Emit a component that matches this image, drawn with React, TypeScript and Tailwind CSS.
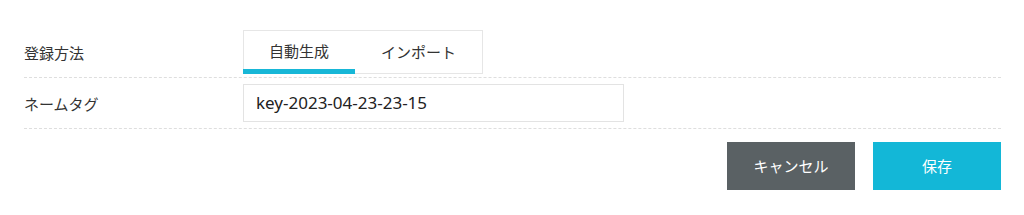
import React from "react";

export default function App() {
  return (
    <div
      className="w-[1024px] h-[215px] bg-white pt-[30px] pl-6 pr-[23px] text-[#333]"
      style={{ fontFamily: '"Noto Sans CJK JP", "Noto Sans", sans-serif' }}
    >
      <div className="flex items-center pb-[3px] border-b border-dashed border-[#dedede]">
        <div className="w-[219px] text-[15px] leading-none">登録方法</div>
        <div className="flex h-[44px] border border-[#e6e6e6]">
          <div className="w-[112px] -mb-px -ml-px flex items-center justify-center border-b-[5px] border-[#17b7d7] text-[15px] pt-[3px]">
            自動生成
          </div>
          <div className="w-[127px] flex items-center justify-center text-[15px]">
            インポート
          </div>
        </div>
      </div>
      <div className="flex items-center py-[6px] border-b border-dashed border-[#dedede]">
        <div className="w-[219px] text-[15px] leading-none">ネームタグ</div>
        <div
          className="w-[381px] h-[38px] border border-[#e3e3e3] flex items-center pl-3 text-[17px] text-[#222]"
          style={{ fontFamily: '"Noto Sans", "Noto Sans CJK JP", sans-serif' }}
        >
          key-2023-04-23-23-15
        </div>
      </div>
      <div className="flex justify-end gap-[18px] mt-[13px]">
        <button className="w-[128px] h-[48px] bg-[#5a6164] text-white text-[15px]">キャンセル</button>
        <button className="w-[128px] h-[48px] bg-[#13b7d7] text-white text-[15px]">保存</button>
      </div>
    </div>
  );
}
